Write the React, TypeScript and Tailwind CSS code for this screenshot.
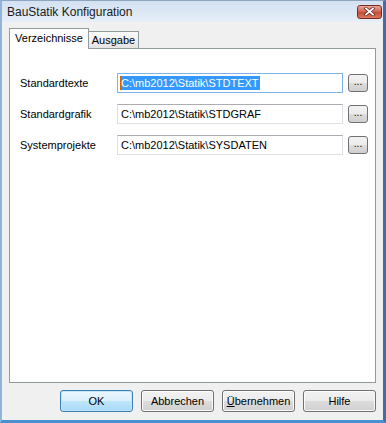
import React from "react";

const font = "font-['Liberation_Sans',Arial,sans-serif] text-[11px] leading-none text-black";

const rows = [
  { label: "Standardtexte", value: "C:\\mb2012\\Statik\\STDTEXT", focused: true },
  { label: "Standardgrafik", value: "C:\\mb2012\\Statik\\STDGRAF", focused: false },
  { label: "Systemprojekte", value: "C:\\mb2012\\Statik\\SYSDATEN", focused: false },
];

function DialogButton({ children, isDefault }: { children: React.ReactNode; isDefault?: boolean }) {
  return (
    <button
      className={
        isDefault
          ? "flex h-[22px] w-[73px] items-center justify-center rounded-[3px] border border-[#3c7fb1] bg-[linear-gradient(#eaf6fd_0%,#d9f0fc_50%,#bee6fd_50%,#a7d9f5_100%)] shadow-[inset_0_0_0_1px_#c4e5f6]"
          : "flex h-[22px] w-[73px] items-center justify-center rounded-[3px] border border-[#707070] bg-[linear-gradient(#f2f2f2_0%,#ebebeb_50%,#dddddd_50%,#cfcfcf_100%)] shadow-[inset_0_0_0_1px_#fcfcfc]"
      }
    >
      {children}
    </button>
  );
}

export default function App() {
  return (
    <div className={`${font} flex h-[423px] w-[386px] flex-col border-t border-l-2 border-r-[3px] border-b-[3px] border-t-[#8ea5c2] border-l-[#8fb3db] border-r-[#3f6ea8] border-b-[#4a8fd0] bg-[#f0f0f0]`}>
      {/* title bar */}
      <div className="flex h-[21px] items-center justify-between bg-[linear-gradient(#d3e1f2,#e6eef8)] pl-[5px] pr-[1px]">
        <span className="text-[12px] text-[#1a1a1a]">BauStatik Konfiguration</span>
        <div className="flex h-[14px] w-[25px] items-center justify-center rounded-[3px] border border-[#7a2a20] bg-[linear-gradient(#e7a89b,#d0604c_50%,#c44a35_51%,#d77a5e)]">
          <svg width="11" height="9" viewBox="0 0 11 9">
            <path d="M2 1.5 L9 7.5 M9 1.5 L2 7.5" stroke="#6b2418" strokeWidth="3.2" strokeLinecap="square" />
            <path d="M2 1.5 L9 7.5 M9 1.5 L2 7.5" stroke="#ffffff" strokeWidth="1.8" strokeLinecap="square" />
          </svg>
        </div>
      </div>

      {/* body */}
      <div className="flex flex-1 flex-col px-[7px] pt-[6px]">
        {/* tabs */}
        <div className="flex h-[20px] items-end">
          <div className="relative z-10 -mb-px flex h-[21px] w-[80px] items-center justify-center border border-b-0 border-[#919b9c] bg-white pb-[2px]">
            Verzeichnisse
          </div>
          <div className="flex h-[17px] w-[50px] items-center justify-center border border-l-0 border-b-0 border-[#919b9c] bg-[linear-gradient(#fbfbfb,#e3e3e3)] pt-[1px]">
            Ausgabe
          </div>
        </div>

        {/* panel */}
        <div className="flex h-[335px] w-[367px] flex-col gap-[11px] border border-[#919b9c] bg-white pl-[10px] pt-[24px]">
          {rows.map((r) => (
            <div key={r.label} className="flex h-[20px] items-center">
              <span className="w-[97px]">{r.label}</span>
              <div
                className={
                  r.focused
                    ? "flex h-[20px] w-[226px] items-center border border-[#7eb4ea] pl-[2px]"
                    : "flex h-[20px] w-[226px] items-center border border-[#dbdfe6] border-t-[#abadb3] pl-[3px]"
                }
              >
                {r.focused ? (
                  <>
                    <span className="h-[14px] w-px bg-[#cc6600]" />
                    <span className="flex h-[14px] items-center bg-[#3399ff] pr-[1px] text-white">{r.value}</span>
                  </>
                ) : (
                  <span>{r.value}</span>
                )}
              </div>
              <button className="ml-[5px] flex h-[18px] w-[20px] items-end justify-center rounded-[3px] border border-[#707070] bg-[linear-gradient(#f2f2f2_0%,#ebebeb_50%,#dddddd_50%,#cfcfcf_100%)] pb-[4px] text-[10px]">
                ...
              </button>
            </div>
          ))}
        </div>

        {/* buttons */}
        <div className="mt-[7px] flex justify-end gap-[8px]">
          <DialogButton isDefault>OK</DialogButton>
          <DialogButton>Abbrechen</DialogButton>
          <DialogButton>
            <span className="underline">Ü</span>bernehmen
          </DialogButton>
          <DialogButton>Hilfe</DialogButton>
        </div>
      </div>
    </div>
  );
}
